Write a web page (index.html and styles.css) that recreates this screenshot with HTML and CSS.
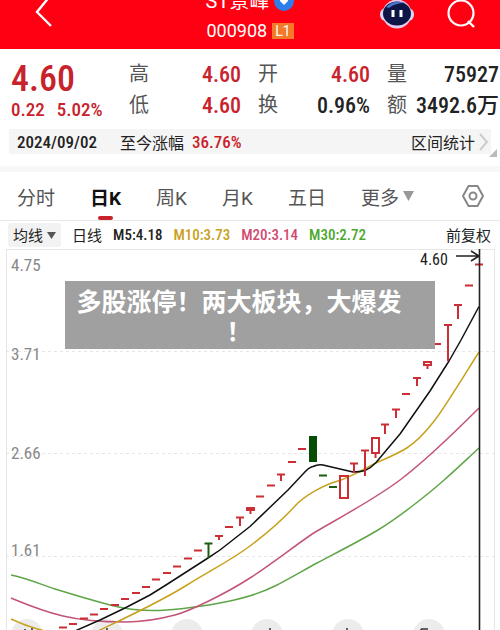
FILE: index.html
```html
<!DOCTYPE html>
<html lang="zh-CN">
<head>
    <meta charset="UTF-8">
    <meta name="viewport" content="width=device-width, initial-scale=1.0">
    <title>ST景峰 000908</title>
    <link rel="stylesheet" href="styles.css">
</head>
<body>
    <header class="topbar">
        <button class="icon-btn back" aria-label="返回">
            <svg width="20" height="36" viewBox="0 0 20 36"><path d="M16 4 L3 20 L17 34" fill="none" stroke="#fff" stroke-width="2.4"/></svg>
        </button>
        <div class="stock">
            <div class="stock-name">ST景峰
                <svg width="20" height="20" viewBox="0 0 20 20"><circle cx="10" cy="10" r="10" fill="#2f7de8"/><path d="M6 7h8v3l-4 4-4-4z" fill="#fff"/></svg>
            </div>
            <div class="stock-code">000908 <span class="level">L1</span></div>
        </div>
        <div class="tools">
            <button class="icon-btn" aria-label="助手">
                <svg width="34" height="30" viewBox="0 0 34 30">
                    <ellipse cx="17" cy="15" rx="14.5" ry="14.5" fill="#e3c8ee"/>
                    <rect x="0" y="9" width="34" height="13" rx="6" fill="#d9d5f5"/>
                    <ellipse cx="17" cy="14.5" rx="14" ry="12" fill="#0c1546"/>
                    <path d="M6 8Q14 0 25 4Q15 4 9 9z" fill="#4a74c8"/>
                    <path d="M13 11v7M21 11v7" stroke="#fff" stroke-width="3"/>
                </svg>
            </button>
            <button class="icon-btn" aria-label="搜索">
                <svg width="30" height="32" viewBox="0 0 30 32"><circle cx="15" cy="16" r="12.500" fill="none" stroke="#fff" stroke-width="2.200"/><path d="M22 24l6 6" stroke="#fff" stroke-width="2.400"/></svg>
            </button>
        </div>
    </header>

    <section class="quote">
        <div class="price">
            <div class="price-now">4.60</div>
            <div class="price-diff"><span>0.22</span><span>5.02%</span></div>
        </div>
        <dl class="stats">
            <div><dt>高</dt><dd class="up">4.60</dd></div>
            <div><dt>开</dt><dd class="up">4.60</dd></div>
            <div><dt>量</dt><dd>75927</dd></div>
            <div><dt>低</dt><dd class="up">4.60</dd></div>
            <div><dt>换</dt><dd>0.96%</dd></div>
            <div><dt>额</dt><dd>3492.6万</dd></div>
        </dl>
    </section>

    <div class="range">
        <span class="range-date">2024/09/02</span>
        <span class="range-label">至今涨幅</span>
        <span class="up">36.76%</span>
        <button class="range-btn">区间统计
            <svg width="10" height="18" viewBox="0 0 10 18"><path d="M1 1l7 8-7 8" fill="none" stroke="#ccc" stroke-width="2"/></svg>
        </button>
        <svg class="corner" width="8" height="8" viewBox="0 0 8 8"><path d="M8 0v8H0z" fill="#bbb"/></svg>
    </div>

    <nav class="tabs">
        <button>分时</button>
        <button class="active">日K</button>
        <button>周K</button>
        <button>月K</button>
        <button>五日</button>
        <button>更多<svg width="18" height="20" viewBox="0 0 18 20"><path d="M4 5h11L9.500 15z" fill="#999"/></svg></button>
        <button class="settings" aria-label="设置">
            <svg width="22" height="24" viewBox="0 0 22 24"><path d="M6.500 2h9L21 12l-5.500 10h-9L1 12z" fill="none" stroke="#888" stroke-width="2" stroke-linejoin="round"/><circle cx="11" cy="12" r="3.500" fill="none" stroke="#888" stroke-width="2"/></svg>
        </button>
    </nav>

    <div class="legend">
        <button class="ma-btn">均线<svg width="9" height="8" viewBox="0 0 9 8"><path d="M0 1h9L4.500 8z" fill="#555"/></svg></button>
        <span>日线</span>
        <span class="ma">M5:4.18</span>
        <span class="ma m10">M10:3.73</span>
        <span class="ma m20">M20:3.14</span>
        <span class="ma m30">M30:2.72</span>
        <span class="adjust">前复权</span>
    </div>

    <main class="chart">
        <svg class="plot" viewBox="0 248 500 382">
            <g class="frame">
                <path d="M6 249.500H494M6.500 249V630M494.500 249V630"/>
                <path class="grid" d="M6 351.500H494M6 453.500H494M6 556.500H494"/>
            </g>
            <g class="dots">
                <circle cx="27" cy="635" r="16"/><circle cx="107" cy="635" r="16"/><circle cx="187" cy="635" r="16"/>
                <circle cx="267" cy="635" r="16"/><circle cx="348" cy="635" r="16"/><circle cx="429" cy="635" r="16"/>
            </g>
            <path d="M25 629v1M32 628v2M107 628v2M270 628v2M347 628v2M421 629h7M421 629v1" stroke="#333" stroke-width="1.500"/>
            <g class="axis">
                <text x="11" y="271">4.75</text>
                <text x="11" y="360">3.71</text>
                <text x="11" y="459">2.66</text>
                <text x="11" y="556">1.61</text>
            </g>
            <g class="line">
                <path stroke="#5fa548" d="M11 575C30 579 42 585 55 589S95 601 110 605S145 611 160 610.500S205 606 225 602S263 592 275 586S304 570 317 563S358 542 378 530S427 495 443 481S468 458 479 448"/>
                <path stroke="#c25577" d="M11 598C28 605 42 611 63 616S105 622 125 622S160 619 175 615S225 594 250 578S302 540 317 531S375 499 400 480S455 432 479 408"/>
                <path stroke="#c8a11c" d="M11 619C24 625 32 628 45 631M98 631C125 618 160 602 187 585S230 561 250 546S285 517 295 506S324 485 338 481S365 468 376 463S397 454 406 448.500S425 433 435 420S465 374 479 352"/>
                <path stroke="#111" d="M75 631L100 620L125 608L150 595L166 585L208 558L220 550L250 526.500L288 490L303 474Q309 467 313 466.500Q318 464 323 465L340 469L353 472Q360 472 365 470.500Q371 468 376 462.500L400 434L430 391L449 361L461 340L479 306.500"/>
            </g>
            <g class="up-k">
                <path d="M59 627.500h8M69 624h8M80 618.500h8M90 614.500h8M100 609h8M111 605h8M121 599h8M132 593h8M142 587h8M152 579.500h8M163 573h8M173 566.500h8M184 558.500h8M194 550.500h8M225 527h8M256 496.500h8M267 485.500h8M288 462h8M298 449h8M402 394h8M433 344h8M465 285.500h8M475 264.500h8"/>
                <path d="M215 536h8M219 536v4M236 517.500h8M240 517v9M277 474.500h8M281 474v7M350 463.500h8M354 463v10M361 450.500h8M365 450v26M381 424.500h8M385 424v10M392 409.500h8M396 409v9M413 378h8M417 378v8M444 325h8M448 325v36M454 305h8M458 305v14"/>
                <path d="M247 508h7v2h-7zM250.500 510v4M424 362h7v3h-7zM427.500 365v4M340 476h8v22h-8zM372 438h7v15h-7zM375.500 453v5"/>
            </g>
            <g class="down-k">
                <path d="M204.500 543.500h8M208.500 543v15M319 475.500h8M329 487h8"/>
                <rect x="309" y="436" width="8" height="26"/>
            </g>
            <path d="M479.500 249V630M456 256H478M471 251l8 5-8 5" fill="none" stroke="#222" stroke-width="1.600"/>
            <text class="last" x="420" y="265">4.60</text>
        </svg>
        <h1 class="banner">多股涨停！两大板块，大爆发！</h1>
    </main>
</body>
</html>
```
FILE: styles.css
```css
* {
    box-sizing: border-box;
}
body {
    margin: 0;
    background: #fff;
    color: #222;
    font-family: "Roboto Condensed", "Liberation Sans Narrow", Roboto, "Noto Sans CJK SC", sans-serif;
}
button {
    padding: 0;
    border: none;
    background: none;
    color: inherit;
    font: inherit;
    white-space: nowrap;
    cursor: pointer;
}
svg {
    display: block;
}
.up {
    color: #c8222c;
}
.topbar {
    display: grid;
    grid-template-columns: 1fr auto 1fr;
    grid-template-rows: 100%;
    align-items: end;
    height: 49px;
    padding: 0 24px;
    overflow: hidden;
    background: #fe0012;
    color: #fff;
}
.back {
    margin-left: 10px;
    padding-bottom: 21px;
}
.stock-name, .stock-code {
    display: flex;
    align-items: center;
    justify-content: center;
    gap: 5px;
    white-space: nowrap;
}
.stock-name {
    margin-bottom: 5px;
    font-family: Roboto, "Noto Sans CJK SC", sans-serif;
    font-size: 20px;
    line-height: 26px;
}
.stock-code {
    padding-bottom: 6px;
    font-family: Roboto, sans-serif;
    font-size: 18px;
    line-height: 24px;
}
.level {
    padding: 0 3px;
    background: #f27a28;
    font-size: 14px;
    line-height: 16px;
}
.tools {
    display: flex;
    align-items: flex-end;
    justify-content: flex-end;
    gap: 32px;
    padding-bottom: 20px;
}
.quote {
    display: flex;
    gap: 28px;
    padding: 10px 1px 8px 11px;
}
.price {
    width: 90px;
    color: #c8222c;
    font-weight: 500;
    white-space: nowrap;
}
.price-now {
    font-size: 36px;
    line-height: 40px;
}
.price-diff {
    display: flex;
    gap: 12px;
    font-size: 19px;
    line-height: 22px;
}
.stats {
    display: grid;
    flex: 1;
    grid-template-columns: 112px 112px 1fr;
    column-gap: 17px;
    margin: 0;
}
.stats div {
    display: flex;
    justify-content: space-between;
    font-size: 22px;
    line-height: 31px;
    white-space: nowrap;
}
.stats dt {
    color: #555;
    font-size: 20px;
}
.stats dd {
    margin: 0;
    font-weight: 500;
}
.range {
    position: relative;
    display: flex;
    align-items: center;
    height: 25px;
    margin: 0 9px;
    padding: 0 2px 0 8px;
    background: #f5f5f5;
    font-size: 17px;
    font-weight: 500;
}
.range-date {
    margin-right: 23px;
}
.range-label, .range-btn {
    font-size: 16px;
    font-weight: 400;
}
.range .up {
    margin-left: 8px;
}
.range-btn {
    display: flex;
    align-items: center;
    gap: 4px;
    margin-left: auto;
}
.corner {
    position: absolute;
    right: -6px;
    bottom: -3px;
}
.tabs {
    display: flex;
    align-items: center;
    gap: 35px;
    height: 55px;
    margin-top: 12px;
    padding: 0 16px 0 17px;
    border-top: 6px solid #f7f7f7;
    border-bottom: 1px solid #e8e8e8;
    color: #555;
    font-family: Roboto, "Noto Sans CJK SC", sans-serif;
    font-size: 19px;
}
.tabs button {
    display: flex;
    align-items: center;
    height: 48px;
}
.tabs .settings {
    margin-left: auto;
}
.tabs .active {
    position: relative;
    color: #111;
    font-weight: bold;
}
.tabs .active::after {
    content: "";
    position: absolute;
    bottom: 0;
    left: 25%;
    width: 50%;
    height: 4px;
    border-radius: 2px;
    background: #c8222c;
}
.legend {
    display: flex;
    align-items: center;
    gap: 11px;
    height: 27px;
    padding: 0 9px 0 8px;
    font-size: 15px;
    white-space: nowrap;
}
.ma-btn {
    display: flex;
    align-items: center;
    gap: 4px;
    height: 24px;
    padding: 0 5px;
    border-radius: 3px;
    background: #f2f2f2;
}
.legend .ma {
    font-weight: 500;
}
.m10 {
    color: #c8a11c;
}
.m20 {
    color: #d14a72;
}
.m30 {
    color: #4ba82e;
}
.adjust {
    margin-left: auto;
}
.chart {
    position: relative;
}
.plot {
    width: 100%;
    height: auto;
}
.frame path {
    fill: none;
    stroke: #e6e6e6;
}
.frame .grid {
    stroke-dasharray: 3 3;
}
.dots circle {
    fill: #ececec;
}
.axis {
    fill: #888;
    font-size: 17px;
}
.last {
    fill: #222;
    font-size: 16px;
}
.line path {
    fill: none;
    stroke-width: 1.5;
    stroke-linejoin: round;
}
.up-k path {
    fill: none;
    stroke: #cb2f35;
    stroke-width: 2;
}
.down-k path {
    fill: none;
    stroke: #1c5c10;
    stroke-width: 2;
}
.down-k rect {
    fill: #064d06;
}
/* the closing mark may start a line of its own */
.banner {
    position: absolute;
    top: 33px;
    left: 13%;
    width: 74%;
    margin: 0;
    padding: 4px 32px 4px 10px;
    background: #a0a0a0;
    color: #fff;
    font-family: "Noto Sans CJK SC", sans-serif;
    font-size: 25px;
    font-weight: bold;
    line-height: 30px;
    text-align: center;
    line-break: anywhere;
}
```
